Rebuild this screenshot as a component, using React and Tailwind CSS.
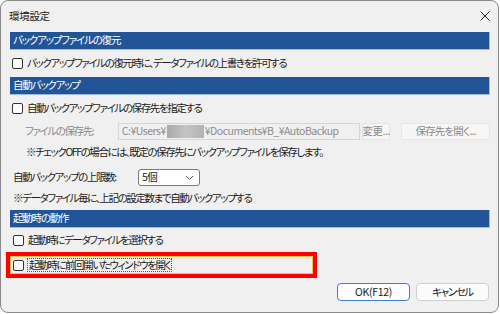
import React from "react";

const font = "font-['Noto_Sans_CJK_JP',sans-serif] [font-feature-settings:'palt']";

function Header({ children }) {
  return (
    <div className="h-[18px] bg-[#215597] border-r border-b border-[#9fbbe0] flex items-center pl-[3px] text-white whitespace-nowrap tracking-[-1.2px]">
      {children}
    </div>
  );
}

function Box() {
  return <span className="inline-block w-[11px] h-[11px] bg-white border border-[#333] rounded-[2px] shrink-0" />;
}

export default function App() {
  return (
    <div className={`w-[500px] h-[314px] bg-white ${font} text-[#1a1a1a] text-[10.5px] tracking-[-1.4px] leading-none`}>
      <div className="w-[499px] h-[313px] bg-[#f0f0f0] border border-[#8a8a8a] rounded-[8px] flex flex-col">
        {/* title bar */}
        <div className="h-[30px] flex items-center justify-between pl-[8px] pr-[6px] shrink-0">
          <span className="text-[10.5px] tracking-[-0.3px]">環境設定</span>
          <svg width="12" height="12" viewBox="0 0 12 12" className="mr-[1px]">
            <path d="M1.5 1.5 L10.5 10.5 M10.5 1.5 L1.5 10.5" stroke="#222" strokeWidth="1" />
          </svg>
        </div>
        <div className="pl-[9px] pr-[8px] flex flex-col">
          <div className="mt-[1px]">
            <Header>バックアップファイルの復元</Header>
          </div>
          <div className="h-[27px] flex items-center gap-[4px] pl-[2px] whitespace-nowrap">
            <Box />
            <span>バックアップファイルの復元時に、データファイルの上書きを許可する</span>
          </div>
          <Header>自動バックアップ</Header>
          <div className="h-[27px] flex items-center gap-[4px] pl-[2px] whitespace-nowrap">
            <Box />
            <span>自動バックアップファイルの保存先を指定する</span>
          </div>
          <div className="h-[18px] flex items-center pl-[15px] whitespace-nowrap">
            <span className="w-[93px] text-[#8a8a8a]">ファイルの保存先:</span>
            <div className="w-[243px] h-[17px] border border-[#d6d6d6] bg-[#f0f0f0] flex items-center pl-[3px] text-[#8a8a8a] tracking-[-0.5px]">
              <span>C:¥Users¥</span>
              <span className="inline-block w-[37px] h-[13px] bg-gradient-to-r from-[#a9a9a9] via-[#c4c4c4] to-[#b3b3b3] mx-[1px]" />
              <span>¥Documents¥B_¥AutoBackup</span>
            </div>
            <div className="ml-[2px] w-[28px] h-[17px] bg-[#f6f6f6] border border-[#e6e6e6] rounded-[2px] flex items-center justify-center text-[#8a8a8a] tracking-[-0.5px]">
              変更...
            </div>
            <div className="ml-[11px] w-[89px] h-[17px] bg-[#f6f6f6] border border-[#e6e6e6] rounded-[2px] flex items-center justify-center text-[#8a8a8a] tracking-[-0.8px]">
              保存先を開く...
            </div>
          </div>
          <div className="h-[25px] flex items-center pl-[16px] whitespace-nowrap">
            ※チェックOFFの場合には、既定の保存先にバックアップファイルを保存します。
          </div>
          <div className="h-[23px] flex items-center pl-[3px] whitespace-nowrap pt-[2px]">
            <span className="w-[125px]">自動バックアップの上限数:</span>
            <div className="w-[62px] h-[17px] bg-white border border-[#7a7a7a] rounded-[3px] flex items-center justify-between pl-[3px] pr-[5px]">
              <span className="tracking-[-0.5px]">5個</span>
              <svg width="9" height="6" viewBox="0 0 9 6">
                <path d="M1 1 L4.5 4.5 L8 1" stroke="#555" strokeWidth="1" fill="none" />
              </svg>
            </div>
          </div>
          <div className="h-[21px] flex items-center pl-[3px] whitespace-nowrap">
            ※データファイル毎に、上記の設定数まで自動バックアップする
          </div>
          <div className="mt-[1px]">
            <Header>起動時の動作</Header>
          </div>
          <div className="h-[24px] flex items-center gap-[4px] pl-[3px] whitespace-nowrap">
            <Box />
            <span>起動時にデータファイルを選択する</span>
          </div>
          <div className="-ml-[4px] w-[311px] h-[26px] border-[4px] border-[#ff0000]">
            <div className="w-full h-full border border-[#f4c24e] flex items-center pl-[2px] gap-[3px] whitespace-nowrap">
              <Box />
              <span className="border border-dotted border-[#555] px-[1px] h-[14px] flex items-center">起動時に前回開いたウィンドウを開く</span>
            </div>
          </div>
          <div className="flex justify-end gap-[6px] mt-[5px] pr-[1px]">
            <div className="w-[73px] h-[18px] bg-[#fdfdfd] border-[1.5px] border-[#3c7fd0] rounded-[4px] flex items-center justify-center tracking-[-0.3px]">
              OK(F12)
            </div>
            <div className="w-[73px] h-[18px] bg-[#fbfbfb] border border-[#d0d0d0] rounded-[4px] flex items-center justify-center">
              キャンセル
            </div>
          </div>
        </div>
      </div>
    </div>
  );
}
